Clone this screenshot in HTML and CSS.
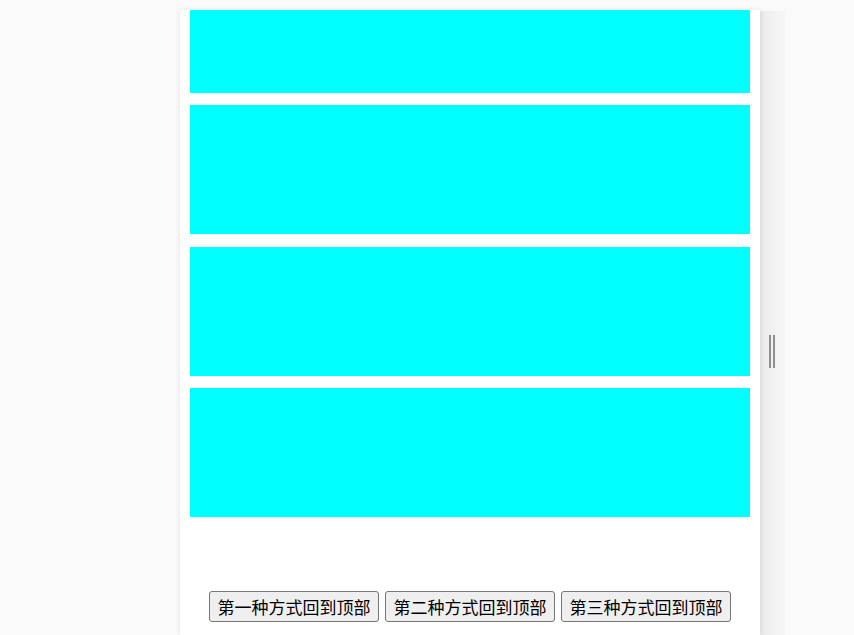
FILE: index.html
```html
<!DOCTYPE html>
<html lang="zh-CN">
<head>
<meta charset="utf-8">
<title>回到顶部</title>
<link rel="stylesheet" href="styles.css">
</head>
<body>
<div class="stage">
  <div class="panel">
    <div class="scroller">
      <div class="box"></div>
      <div class="box"></div>
      <div class="box"></div>
      <div class="box"></div>
      <div class="actions">
        <button class="btn" type="button">第一种方式回到顶部</button>
        <button class="btn" type="button">第二种方式回到顶部</button>
        <button class="btn" type="button">第三种方式回到顶部</button>
      </div>
    </div>
  </div>
  <div class="handle">
    <div class="grip"><span class="line"></span><span class="line"></span></div>
  </div>
</div>
</body>
</html>
```

FILE: styles.css
```css
html, body {
  margin: 0;
  padding: 0;
  height: 100%;
  overflow: hidden;
}
body {
  background: #fafafa;
  font-family: "Noto Sans CJK SC", "Noto Sans", sans-serif;
}
.stage {
  display: flex;
  align-items: flex-start;
  padding: 10px 0 0 180px;
  height: 100%;
  box-sizing: border-box;
}
.panel {
  width: 580px;
  height: 625px;
  background: #ffffff;
  overflow: hidden;
  box-shadow: 0 0 6px rgba(0, 0, 0, 0.09);
  position: relative;
  z-index: 1;
  flex: none;
}
.scroller {
  padding: 0 10px;
  margin-top: -46px;
  display: flex;
  flex-direction: column;
  gap: 12.33px;
}
.box {
  height: 129px;
  background: #00ffff;
  flex: none;
}
.actions {
  margin-top: 61.67px;
  display: flex;
  justify-content: center;
  gap: 6px;
}
.btn {
  flex: none;
  white-space: nowrap;
  font-family: "Noto Sans CJK SC", "Noto Sans", sans-serif;
  font-size: 17px;
  line-height: 27px;
  padding: 1px 7.5px;
  color: #000;
  background: #efefef;
  border: 1px solid #767676;
  border-radius: 3px;
  margin: 0;
}
.handle {
  flex: none;
  width: 25px;
  height: 700px;
  margin-top: 1px;
  background: linear-gradient(to right, #e9e9e9 0%, #efefef 30%, #f3f3f3 70%, #f6f6f6 100%);
  display: flex;
  justify-content: center;
  padding-top: 324px;
  box-sizing: border-box;
}
.grip {
  display: flex;
  gap: 2px;
  height: 33px;
  margin-left: -1px;
}
.line {
  width: 2px;
  height: 33px;
  background: #8e8e8e;
}
```
